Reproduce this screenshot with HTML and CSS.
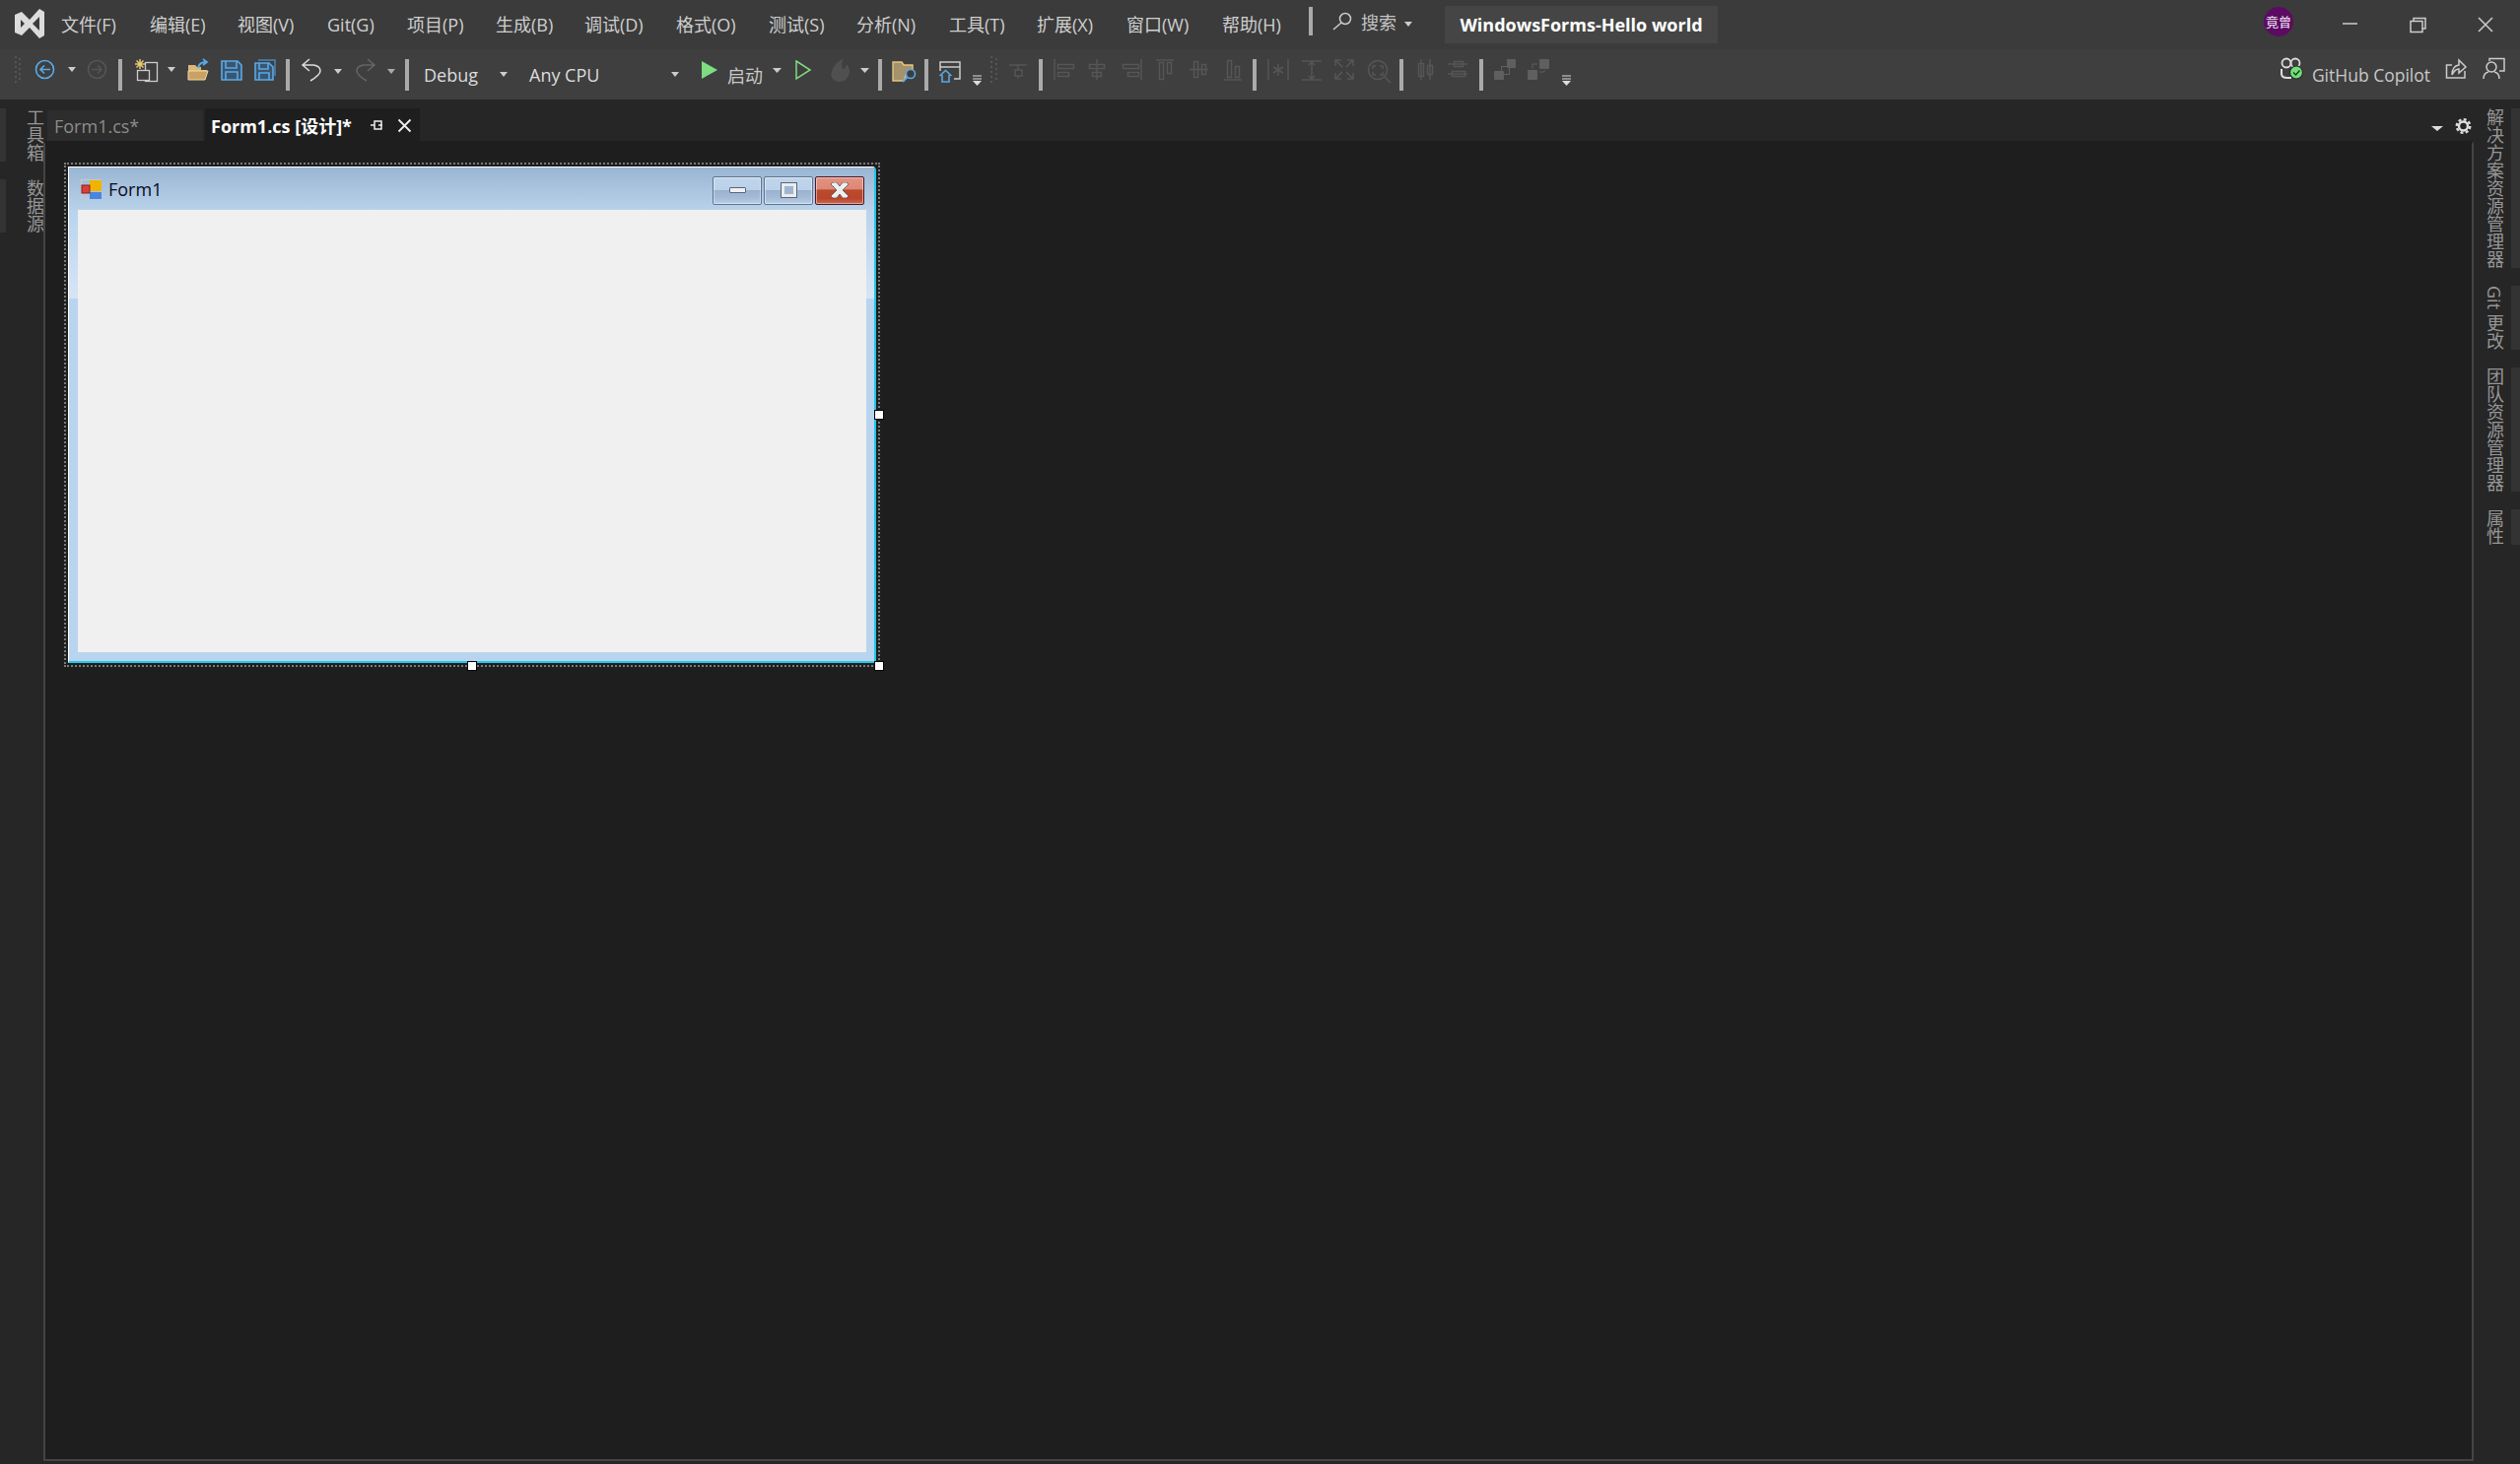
FILE: index.html
```html
<!DOCTYPE html>
<html lang="zh-CN">
<head>
    <meta charset="UTF-8">
    <title>WindowsForms-Hello world</title>
    <link rel="stylesheet" href="styles.css">
</head>
<body>
<div class="app">
    <div class="titlebar">
        <svg class="ico" width="47" height="50" viewBox="0 0 47 50">
            <path fill="#dcdcdc" fill-rule="evenodd" d="M15 15L22 12L30 20L40 9L45 12V36L40 39L30 28L22 36L15 33ZM21 20V28L25 24ZM40 17L33 24L40 31Z"/>
        </svg>
        <div class="menu">
            <span>文件(F)</span><span>编辑(E)</span><span>视图(V)</span><span>Git(G)</span><span>项目(P)</span><span>生成(B)</span><span>调试(D)</span><span>格式(O)</span><span>测试(S)</span><span>分析(N)</span><span>工具(T)</span><span>扩展(X)</span><span>窗口(W)</span><span>帮助(H)</span>
        </div>
        <div class="sep sep-title"></div>
        <svg class="ico search-ico" width="20" height="50" viewBox="1352 0 20 50">
            <circle cx="1365" cy="19" r="5.5" fill="none" stroke="#ccc" stroke-width="1.5"/>
            <path d="M1361 23L1353 30" stroke="#ccc" stroke-width="1.5"/>
        </svg>
        <span class="search-label">搜索</span>
        <i class="caret search-caret"></i>
        <div class="title-box">WindowsForms-Hello world</div>
        <div class="title-right">
            <div class="avatar">竟曾</div>
            <svg class="ico" width="230" height="50" viewBox="2327 0 230 50">
                <path d="M2377 24H2392" stroke="#ccc" stroke-width="1.5"/>
                <path d="M2449 21V18.5H2461V29H2458M2446 21.5H2458V32.5H2446Z" fill="none" stroke="#ccc" stroke-width="1.5"/>
                <path d="M2515 18L2529 32M2529 18L2515 32" stroke="#ccc" stroke-width="1.5"/>
            </svg>
        </div>
    </div>

    <div class="toolbar">
        <svg class="ico" width="120" height="51" viewBox="0 50 120 51">
            <path d="M16 57V84M20 59V84" stroke="#555" stroke-width="2" stroke-dasharray="2 3"/>
            <circle cx="45.5" cy="70.5" r="9" fill="none" stroke="#5aa9e6" stroke-width="1.6"/>
            <path d="M51 70.5H41M45 66.5L41 70.5L45 74.5" fill="none" stroke="#5aa9e6" stroke-width="1.6"/>
            <path d="M69 68H77L73 73Z" fill="#ccc"/>
            <circle cx="98.5" cy="70.5" r="9" fill="none" stroke="#555" stroke-width="1.6"/>
            <path d="M93 70.5H103M99 66.5L103 70.5L99 74.5" fill="none" stroke="#555" stroke-width="1.6"/>
        </svg>
        <div class="sep"></div>
        <svg class="ico" width="166" height="51" viewBox="124 50 166 51">
            <path d="M142 60V70M137 65H147M138.5 61.5L145.5 68.5M145.5 61.5L138.5 68.5" stroke="#e8c66e" stroke-width="1.5"/>
            <rect x="147.5" y="63.5" width="12" height="19" fill="#3d3d3d" stroke="#ccc" stroke-width="1.3"/>
            <rect x="139.5" y="71.5" width="12" height="10" fill="#3d3d3d" stroke="#ccc" stroke-width="1.3"/>
            <path d="M170 68H178L174 73Z" fill="#ccc"/>
            <path d="M191 80V66H198L200 68H204V71H210L207 80Z" fill="#dcb67a"/>
            <path d="M191 72H211L208 81H191Z" fill="#c9a263" stroke="#f0d9a8"/>
            <path d="M201 69Q202 63 209 63M206 60L210 63L206 66" fill="none" stroke="#5aa9e6" stroke-width="1.8"/>
            <path d="M225 62H241L245 66V81H225Z" fill="#3a566f" stroke="#5aa9e6" stroke-width="1.6"/>
            <path d="M229 62V69H240V62M229 81V73H241V81" fill="none" stroke="#5aa9e6" stroke-width="1.6"/>
            <path d="M262 61H279V77" fill="none" stroke="#4a86b8" stroke-width="1.5"/>
            <path d="M259 64H273L277 68V81H259Z" fill="#3a566f" stroke="#5aa9e6" stroke-width="1.6"/>
            <path d="M263 64V70H272V64M263 81V74H273V81" fill="none" stroke="#5aa9e6" stroke-width="1.6"/>
        </svg>
        <div class="sep"></div>
        <svg class="ico" width="117" height="51" viewBox="294 50 117 51">
            <path d="M314 60L307 66L314 72M307 66H318Q325 67 325 72Q325 76 315 82" fill="none" stroke="#ddd" stroke-width="1.5"/>
            <path d="M339 70H347L343 75Z" fill="#ccc"/>
            <path d="M373 60L380 66L373 72M380 66H369Q362 67 362 72Q362 76 372 82" fill="none" stroke="#666" stroke-width="1.5"/>
            <path d="M393 70H401L397 75Z" fill="#aaa"/>
        </svg>
        <div class="sep"></div>
        <div class="combo combo-config">Debug<i class="caret"></i></div>
        <div class="combo combo-platform">Any CPU<i class="caret"></i></div>
        <svg class="ico" width="26" height="51" viewBox="712 50 26 51">
            <path d="M712 62L728 71L712 80Z" fill="#7edc82"/>
        </svg>
        <span class="start-label">启动</span>
        <svg class="ico" width="117" height="51" viewBox="774 50 117 51">
            <path d="M784 69H793L788.500 74Z" fill="#ccc"/>
            <path d="M808 62L822 71L808 80Z" fill="none" stroke="#7edc82" stroke-width="1.5"/>
            <path d="M856 59Q847 64 844 72Q841 80 850 83Q861 83 862 73Q862 68 859 65Q858 70 855 70Q853 65 856 59Z" fill="#505050"/>
            <path d="M873 69H882L877.500 74Z" fill="#ccc"/>
        </svg>
        <div class="sep"></div>
        <svg class="ico" width="43" height="51" viewBox="895 50 43 51">
            <path d="M906 63H915L917 66H926V72H921L917 82H906Z" fill="#a5926a" stroke="#e6c583" stroke-width="1.4"/>
            <circle cx="924" cy="75" r="4.500" fill="#3d3d3d" stroke="#5aa9e6" stroke-width="1.6"/>
            <path d="M920.500 78.500L916 83" stroke="#5aa9e6" stroke-width="1.8"/>
        </svg>
        <div class="sep"></div>
        <svg class="ico" width="112" height="51" viewBox="942 50 112 51">
            <path d="M954 72V63H974V80H968M954 68H974" fill="none" stroke="#ccc" stroke-width="1.5"/>
            <path d="M953.500 77L959.500 71.500L965.500 77M956 76V83H963V76" fill="none" stroke="#5aa9e6" stroke-width="1.6"/>
            <path d="M987 77H996M987 80H996" stroke="#ddd"/>
            <path d="M987 82H996L991.500 87Z" fill="#ddd"/>
            <path d="M1006 57V84M1011 59V84" stroke="#555" stroke-width="2" stroke-dasharray="2 3"/>
            <path d="M1024 66H1042M1033 66V80" stroke="#555" stroke-width="1.500"/>
            <rect x="1030" y="71" width="7" height="6" fill="#3d3d3d" stroke="#555" stroke-width="1.500"/>
        </svg>
        <div class="sep"></div>
        <svg class="ico dim" width="213" height="51" viewBox="1058 50 213 51">
            <path d="M1070 60V81"/><rect x="1073.500" y="65.500" width="16" height="4"/><rect x="1073.500" y="73.500" width="11" height="4"/>
            <path d="M1113 60V81"/><rect x="1105.500" y="65.500" width="15" height="4"/><rect x="1108.500" y="73.500" width="9" height="4"/>
            <path d="M1158 60V81"/><rect x="1139.500" y="65.500" width="16" height="4"/><rect x="1144.500" y="73.500" width="11" height="4"/>
            <path d="M1173 61H1191"/><rect x="1176.500" y="63.500" width="4" height="17"/><rect x="1184.500" y="63.500" width="4" height="11"/>
            <path d="M1207 70.500H1226"/><rect x="1211.500" y="62.500" width="4" height="16"/><rect x="1219.500" y="65.500" width="4" height="10"/>
            <path d="M1242 81H1260"/><rect x="1245.500" y="61.500" width="4" height="17"/><rect x="1253.500" y="67.500" width="4" height="11"/>
        </svg>
        <div class="sep"></div>
        <svg class="ico dim" width="145" height="51" viewBox="1275 50 145 51">
            <path d="M1287 60V81M1307 60V81M1297 65V77M1292 68L1302 74M1302 68L1292 74"/>
            <path d="M1321 62H1341M1321 81H1341M1331 63V80M1328 66L1331 63L1334 66M1328 77L1331 80L1334 77"/>
            <path d="M1361 61H1355V67M1355 61L1362 68M1367 61H1373V67M1373 61L1366 68M1361 80H1355V74M1355 80L1362 73M1367 80H1373V74M1373 80L1366 73"/>
            <circle cx="1398" cy="71" r="9.500"/>
            <path d="M1405 78L1411 84M1393 70V67H1396M1400 67H1403V70M1403 73V76H1400M1396 76H1393V73"/>
        </svg>
        <div class="sep"></div>
        <svg class="ico dim" width="77" height="51" viewBox="1424 50 77 51">
            <rect x="1439.500" y="64.500" width="5" height="13"/><rect x="1448.500" y="66.500" width="5" height="9"/>
            <path d="M1442 60V81M1451 60V81"/>
            <rect x="1475.500" y="62.500" width="9" height="5"/><rect x="1473.500" y="72.500" width="13" height="5"/>
            <path d="M1469 65H1489M1469 75H1489"/>
        </svg>
        <div class="sep"></div>
        <svg class="ico" width="95" height="51" viewBox="1505 50 95 51">
            <rect x="1516" y="72" width="10" height="9" rx="1" fill="#5f5f5f"/>
            <rect x="1529" y="60" width="9" height="9" rx="1" fill="#5f5f5f"/>
            <rect x="1523.500" y="67.500" width="8" height="8" fill="none" stroke="#5f5f5f"/>
            <rect x="1550" y="71" width="10" height="10" rx="1" fill="#5f5f5f"/>
            <rect x="1562" y="60" width="10" height="10" rx="1" fill="#5f5f5f"/>
            <path d="M1555 69V65H1560M1562 73H1567V71" fill="none" stroke="#5f5f5f"/>
            <path d="M1585 77H1594M1585 80H1594" stroke="#ddd"/>
            <path d="M1585 82H1594L1589.500 87Z" fill="#ddd"/>
        </svg>
        <div class="copilot">
            <svg class="ico" width="32" height="51" viewBox="2305 50 32 51">
                <circle cx="2311" cy="64" r="4.500" fill="none" stroke="#ddd" stroke-width="1.800"/>
                <circle cx="2320" cy="64" r="4.500" fill="none" stroke="#ddd" stroke-width="1.800"/>
                <path d="M2306 70V75Q2306 79 2312 79H2316M2325 68V70" fill="none" stroke="#ddd" stroke-width="2"/>
                <circle cx="2321" cy="73.500" r="6.500" fill="#6fe07a" stroke="#2a2a2a" stroke-width="1.200"/>
                <path d="M2318 73.500L2320.500 76L2324.500 71.500" fill="none" stroke="#1c3a1e" stroke-width="1.400"/>
            </svg>
            <span class="copilot-label">GitHub Copilot</span>
            <svg class="ico" width="91" height="51" viewBox="2466 50 91 51">
                <path d="M2490 79H2482.500V66H2488M2501 72V79H2490" fill="none" stroke="#ccc" stroke-width="1.500"/>
                <path d="M2488 76Q2488 67 2495 66V61L2502 68L2495 74V70Q2491 70 2488 76Z" fill="none" stroke="#ccc" stroke-width="1.500"/>
                <path d="M2526 62V59.500H2541V72H2536" fill="none" stroke="#ccc" stroke-width="1.500"/>
                <circle cx="2528" cy="68" r="5" fill="none" stroke="#ccc" stroke-width="1.500"/>
                <path d="M2520 80Q2520 74 2525 73M2531 73Q2536 74 2536 80" fill="none" stroke="#ccc" stroke-width="1.500"/>
            </svg>
        </div>
    </div>

    <div class="main">
        <div class="rail rail-left">
            <div class="rail-tab">工具箱</div>
            <div class="rail-tab">数据源</div>
        </div>

        <div class="center">
            <div class="tabrow">
                <div class="tab">Form1.cs*</div>
                <div class="tab tab-active">
                    <span>Form1.cs [设计]*</span>
                    <svg class="ico tab-actions" width="60" height="33" viewBox="366 110 60 33">
                        <path d="M376 127H380M380 123V131H387V123ZM384 127H388" fill="none" stroke="#eee" stroke-width="1.500"/>
                        <path d="M404.500 121.500L416.500 133.500M416.500 121.500L404.500 133.500" stroke="#eee" stroke-width="1.800"/>
                    </svg>
                </div>
                <svg class="ico tab-tools" width="50" height="33" viewBox="2460 110 50 33">
                    <path d="M2467 128H2479L2473 133Z" fill="#ddd"/>
                    <circle cx="2499.500" cy="128" r="4.500" fill="none" stroke="#ddd" stroke-width="2.500"/>
                    <circle cx="2499.500" cy="128" r="6.800" fill="none" stroke="#ddd" stroke-width="2.400" stroke-dasharray="3 2.340"/>
                </svg>
            </div>

            <div class="doc">
                <div class="form-sel">
                    <div class="form">
                        <div class="form-title">
                            <svg class="ico" width="21" height="20" viewBox="82 184 21 20">
                                <rect x="82.500" y="184.500" width="20" height="19" fill="none" stroke="#c9c9c9"/>
                                <rect x="91" y="185" width="12" height="11" fill="#f0b400"/>
                                <rect x="91" y="197" width="12" height="7" fill="#4a86e0"/>
                                <rect x="83" y="190" width="8" height="8" fill="#d8403c" stroke="#8c1c1c"/>
                            </svg>
                            <span class="form-name">Form1</span>
                            <div class="win-btn">
                                <i class="glyph-min"></i>
                            </div>
                            <div class="win-btn">
                                <i class="glyph-max"></i>
                            </div>
                            <div class="win-btn win-close">
                                <svg class="ico" width="18" height="16" viewBox="0 0 18 16">
                                    <path d="M2 0H6L9 4L12 0H16L18 2L12 8L18 14L16 16H12L9 12L6 16H2L0 14L6 8L0 2Z" fill="#eee" stroke="#555" stroke-width="0.800"/>
                                </svg>
                            </div>
                        </div>
                        <div class="form-body">
                            <div class="form-client"></div>
                        </div>
                    </div>
                    <i class="handle handle-r"></i>
                    <i class="handle handle-b"></i>
                    <i class="handle handle-c"></i>
                </div>
            </div>
        </div>

        <div class="rail rail-right">
            <div class="rail-tab">解决方案资源管理器</div>
            <div class="rail-tab">Git 更改</div>
            <div class="rail-tab">团队资源管理器</div>
            <div class="rail-tab">属性</div>
        </div>
    </div>
</div>
</body>
</html>
```

FILE: styles.css
```css
* {
    margin: 0;
    padding: 0;
    box-sizing: border-box;
}

html, body {
    height: 100%;
    overflow: hidden;
}

body {
    font-family: 'Open Sans', 'Noto Sans CJK SC', sans-serif;
    font-size: 18px;
    background: #262626;
    color: #d0d0d0;
}

.app {
    height: 100vh;
    display: flex;
    flex-direction: column;
}

.ico {
    display: block;
    flex: none;
}

.sep {
    flex: none;
    width: 4px;
    height: 32px;
    background: #aaaaaa;
}

.caret {
    display: block;
    flex: none;
    width: 0;
    height: 0;
    border-left: 4.5px solid transparent;
    border-right: 4.5px solid transparent;
    border-top: 5px solid #cccccc;
}

/* Title bar */
.titlebar {
    flex: none;
    height: 50px;
    display: flex;
    align-items: center;
    background: #3b3b3b;
}

.menu {
    margin-left: 15px;
    display: grid;
    grid-template-columns: 90px 89px 91px 81px 90px 90px 93px 94px 89px 94px 89px 91px 97px 88px;
    line-height: 46px;
    white-space: nowrap;
    color: #cfcfcf;
}

.sep-title {
    height: 29px;
    margin-bottom: 7px;
}

.search-ico {
    margin-left: 20px;
}

.search-label {
    margin-left: 9px;
    margin-bottom: 6px;
    color: #c4c4c4;
}

.search-caret {
    margin-left: 8px;
    margin-bottom: 2px;
}

.title-box {
    margin-left: 33px;
    width: 277px;
    height: 38px;
    margin-bottom: 0;
    text-align: center;
    line-height: 38px;
    font-weight: 700;
    font-size: 18px;
    color: #ffffff;
    background: #454545;
}

.title-right {
    margin-left: auto;
    display: flex;
    align-items: center;
}

.avatar {
    width: 30px;
    height: 30px;
    margin-bottom: 6px;
    border-radius: 50%;
    background: #5c0b63;
    color: #f2e6f3;
    font-size: 13px;
    line-height: 30px;
    text-align: center;
    white-space: nowrap;
}

/* Toolbar */
.toolbar {
    flex: none;
    height: 51px;
    display: flex;
    align-items: center;
    background: #3f3f3f;
}

.combo {
    flex: none;
    display: flex;
    align-items: center;
    justify-content: space-between;
    height: 32px;
    color: #dcdcdc;
}

.combo-config {
    width: 122px;
    padding-left: 15px;
    padding-right: 22px;
}

.combo-platform {
    width: 175px;
    padding-right: 23px;
}

.start-label {
    width: 36px;
    color: #c8c8c8;
}

.dim path, .dim rect, .dim circle {
    fill: none;
    stroke: #565656;
    stroke-width: 1.5;
}

.copilot {
    margin-left: auto;
    display: flex;
    align-items: center;
}

.copilot-label {
    font-size: 17.5px;
    color: #c8c8c8;
    white-space: nowrap;
}

/* Main area */
.main {
    flex: 1;
    min-height: 0;
    display: flex;
}

.rail {
    flex: none;
    display: flex;
    flex-direction: column;
    gap: 18px;
    padding-top: 9px;
}

.rail-left {
    width: 44px;
}

.rail-right {
    width: 47px;
}

.rail-tab {
    writing-mode: vertical-rl;
    line-height: 18px;
    white-space: nowrap;
    color: #969696;
}

.rail-left .rail-tab {
    border-left: 6px solid #333333;
    padding-left: 7px;
}

.rail-right .rail-tab {
    border-right: 9px solid #333333;
    padding-left: 12px;
    padding-right: 8px;
}

.center {
    flex: 1;
    min-width: 0;
    display: flex;
    flex-direction: column;
    padding-bottom: 3px;
}

.tabrow {
    flex: none;
    height: 42px;
    display: flex;
    align-items: flex-end;
    padding-left: 4px;
}

.tab {
    flex: none;
    width: 158px;
    height: 31px;
    padding-left: 7px;
    display: flex;
    align-items: center;
    background: #2d2d2d;
    color: #8c8c8c;
}

.tab-active {
    width: 218px;
    height: 33px;
    margin-left: 2px;
    padding-left: 6px;
    background: #1e1e1e;
    color: #ffffff;
    font-weight: 700;
}

.tab-actions {
    margin-left: auto;
}

.tab-tools {
    margin-left: auto;
}

.doc {
    flex: 1;
    min-height: 0;
    padding: 19px;
    background: #1e1e1e;
    border-left: 2px solid #444444;
    border-right: 2px solid #444444;
    border-bottom: 2px solid #444444;
    box-shadow: inset 0 3px 0 #1e1e1e;
    margin-top: 0;
    border-top: 3px solid #1e1e1e;
}

/* Designer form */
.form-sel {
    position: relative;
    width: 828px;
    height: 512px;
    padding: 2px;
    border: 2px dotted #7a7a7a;
}

.form {
    height: 100%;
    display: flex;
    flex-direction: column;
    color: #000000;
    background: #b9d4ee;
    border-top: 1px solid #ffffff;
    border-left: 1px solid #ffffff;
    border-right: 2px solid #1fc6e8;
    border-bottom: 2px solid #1fc6e8;
    border-top-right-radius: 4px;
}

.form-title {
    flex: none;
    height: 43px;
    display: flex;
    align-items: center;
    gap: 2px;
    padding-left: 12px;
    padding-right: 10px;
    background: linear-gradient(#9ab5d2, #b9d2ea);
}

.form-name {
    margin-left: 5px;
    margin-right: auto;
    font-size: 18px;
    color: #0a0a1e;
}

.win-btn {
    flex: none;
    width: 50px;
    height: 29px;
    margin-top: 3px;
    display: flex;
    align-items: center;
    justify-content: center;
    border: 1px solid #5f7390;
    border-radius: 2px;
    box-shadow: inset 0 0 0 1px rgba(255, 255, 255, 0.45);
    background: linear-gradient(#bfd5ea 0, #bad1e8 48%, #9ab2cf 50%, #a6bdd8 80%, #b9d1ea 100%);
}

.win-close {
    border-color: #4a1626;
    background: linear-gradient(#e39282 0, #de8877 45%, #bb4a2e 47%, #b8452c 80%, #cc6a50 100%);
}

.glyph-min {
    display: block;
    width: 17px;
    height: 6px;
    background: #f0f0f0;
    border: 1px solid #56657e;
    border-radius: 1px;
}

.glyph-max {
    display: block;
    width: 17px;
    height: 16px;
    background: #9fb6d2;
    border: 4px solid #ececec;
    outline: 1px solid #56657e;
    outline-offset: -1px;
}

.form-body {
    flex: 1;
    min-height: 0;
    padding: 0 8px 9px 9px;
    background: linear-gradient(#b9d3ee, #d6e5f5) 0 0 / 100% 90px no-repeat, #b9d4ee;
}

.form-client {
    height: 100%;
    background: #f0f0f0;
}

.handle {
    position: absolute;
    display: block;
    width: 10px;
    height: 10px;
    background: #ffffff;
    border: 1px solid #000000;
}

.handle-r {
    right: -6px;
    top: 50%;
    margin-top: -5px;
}

.handle-b {
    bottom: -6px;
    left: 50%;
    margin-left: -5px;
}

.handle-c {
    right: -6px;
    bottom: -6px;
}
```
